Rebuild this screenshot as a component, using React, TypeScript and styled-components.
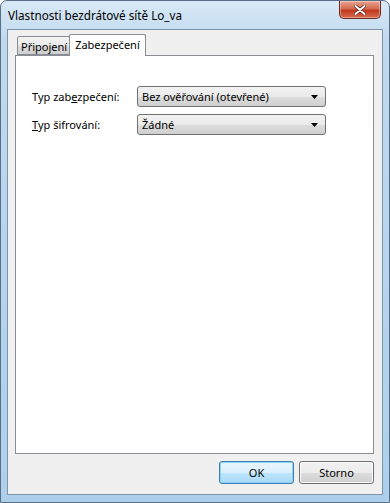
import React from 'react';
import styled, {createGlobalStyle} from 'styled-components';

const GlobalStyle = createGlobalStyle`
    html, body {
        margin: 0;
        padding: 0;
        background: #ffffff;
    }
    body {
        font-family: "Noto Sans", "Open Sans", sans-serif;
        font-size: 11px;
        color: #000;
    }
`

type TabProps = {
    active?: boolean
}

const StyledWindow = styled.div`
    width: 390px;
    height: 503px;
    box-sizing: border-box;
    display: flex;
    flex-direction: column;
    background: linear-gradient(180deg, #d9e9f6 0%, #bfd9ef 40px, #acd0ec 100%);
    border: 1px solid #5a6f86;
    border-radius: 7px 7px 0 0;
    overflow: hidden;
`

const StyledTitleBar = styled.div`
    height: 28px;
    display: flex;
    align-items: flex-start;
    justify-content: space-between;
    padding: 0 7px 0 7px;
    box-sizing: border-box;
`

const StyledTitle = styled.span`
    margin-top: 6px;
    font-size: 11.7px;
    color: #000;
`

const StyledClose = styled.div`
    width: 42px;
    height: 18px;
    box-sizing: border-box;
    border: 1px solid #6b2a22;
    border-top: none;
    border-radius: 0 0 5px 5px;
    background: linear-gradient(180deg, #e8a593 0%, #d6694f 45%, #c0391d 55%, #d96a4c 100%);
    box-shadow: inset 0 0 0 1px rgba(255, 255, 255, 0.35);
    display: flex;
    align-items: center;
    justify-content: center;
    margin-right: 1px;

    svg {
        display: block;
    }
`

const StyledClient = styled.div`
    flex: 1;
    margin: 0 6px 7px 6px;
    background: #f0f0f0;
    border: 1px solid #7f93a9;
    display: flex;
    flex-direction: column;
    padding: 5px 8px 0 7px;
`

const StyledTabStrip = styled.div`
    display: flex;
    align-items: flex-end;
    height: 20px;
    padding-left: 2px;
    position: relative;
    z-index: 1;
`

const StyledTab = styled.div<TabProps>`
    box-sizing: border-box;
    height: ${props => props.active ? '22px' : '19px'};
    margin-bottom: ${props => props.active ? '-1px' : '0'};
    padding: ${props => props.active ? '2px 5px 0 5px' : '2px 2px 0 3px'};
    border: 1px solid #898c95;
    border-bottom: ${props => props.active ? 'none' : '1px solid #898c95'};
    margin-left: ${props => props.active ? '-1px' : '0'};
    background: ${props => props.active
        ? '#ffffff'
        : 'linear-gradient(180deg, #f2f2f2 0%, #ebebeb 50%, #dddddd 51%, #cfcfcf 100%)'};
    border-radius: 2px 2px 0 0;
    color: #000;
    white-space: nowrap;
`

const StyledPanel = styled.div`
    height: 399px;
    box-sizing: border-box;
    background: #ffffff;
    border: 1px solid #898c95;
    padding: 30px 0 0 16px;
    display: grid;
    grid-template-columns: 105px 189px;
    grid-auto-rows: 21px;
    row-gap: 7px;
    align-items: center;
    align-content: start;
`

const StyledLabel = styled.span`
    color: #000;

    u {
        text-decoration: underline;
        text-underline-offset: 1px;
    }
`

const StyledCombo = styled.div`
    height: 21px;
    box-sizing: border-box;
    border: 1px solid #707070;
    border-radius: 3px;
    background: linear-gradient(180deg, #f2f2f2 0%, #ebebeb 50%, #dddddd 51%, #cfcfcf 100%);
    display: flex;
    align-items: center;
    justify-content: space-between;
    padding: 0 7px 0 4px;
    white-space: nowrap;
`

const StyledFooter = styled.div`
    display: flex;
    justify-content: flex-end;
    gap: 5px;
    padding: 7px 0 0 0;
`

const StyledButton = styled.button<TabProps>`
    width: 75px;
    height: 23px;
    box-sizing: border-box;
    font: inherit;
    color: #000;
    border: 1px solid ${props => props.active ? '#3c7fb1' : '#707070'};
    border-radius: 3px;
    background: ${props => props.active
        ? 'linear-gradient(180deg, #eaf6fd 0%, #d9f0fc 50%, #bee6fd 51%, #a7d9f5 100%)'
        : 'linear-gradient(180deg, #f2f2f2 0%, #ebebeb 50%, #dddddd 51%, #cfcfcf 100%)'};
    box-shadow: inset 0 0 0 1px ${props => props.active ? '#8fd2f5' : '#fcfcfc'};
    padding: 0;
`

const Arrow = () => (
    <svg width="7" height="4" viewBox="0 0 7 4">
        <path d="M0 0 H7 L3.5 4 Z" fill="#000"/>
    </svg>
)

const CloseIcon = () => (
    <svg width="12" height="10" viewBox="0 0 12 10">
        <path d="M1.5 1 L10.5 9 M10.5 1 L1.5 9" stroke="#5a1a10" strokeWidth="3.4" strokeLinecap="round"/>
        <path d="M1.5 1 L10.5 9 M10.5 1 L1.5 9" stroke="#ffffff" strokeWidth="2" strokeLinecap="round"/>
    </svg>
)

export default function App() {
    return (
        <>
            <GlobalStyle/>
            <StyledWindow>
                <StyledTitleBar>
                    <StyledTitle>Vlastnosti bezdrátové sítě Lo_va</StyledTitle>
                    <StyledClose><CloseIcon/></StyledClose>
                </StyledTitleBar>
                <StyledClient>
                    <StyledTabStrip>
                        <StyledTab>Připojení</StyledTab>
                        <StyledTab active>Zabezpečení</StyledTab>
                    </StyledTabStrip>
                    <StyledPanel>
                        <StyledLabel>Typ zab<u>e</u>zpečení:</StyledLabel>
                        <StyledCombo>Bez ověřování (otevřené)<Arrow/></StyledCombo>
                        <StyledLabel><u>T</u>yp šifrování:</StyledLabel>
                        <StyledCombo>Žádné<Arrow/></StyledCombo>
                    </StyledPanel>
                    <StyledFooter>
                        <StyledButton active>OK</StyledButton>
                        <StyledButton>Storno</StyledButton>
                    </StyledFooter>
                </StyledClient>
            </StyledWindow>
        </>
    )
}
